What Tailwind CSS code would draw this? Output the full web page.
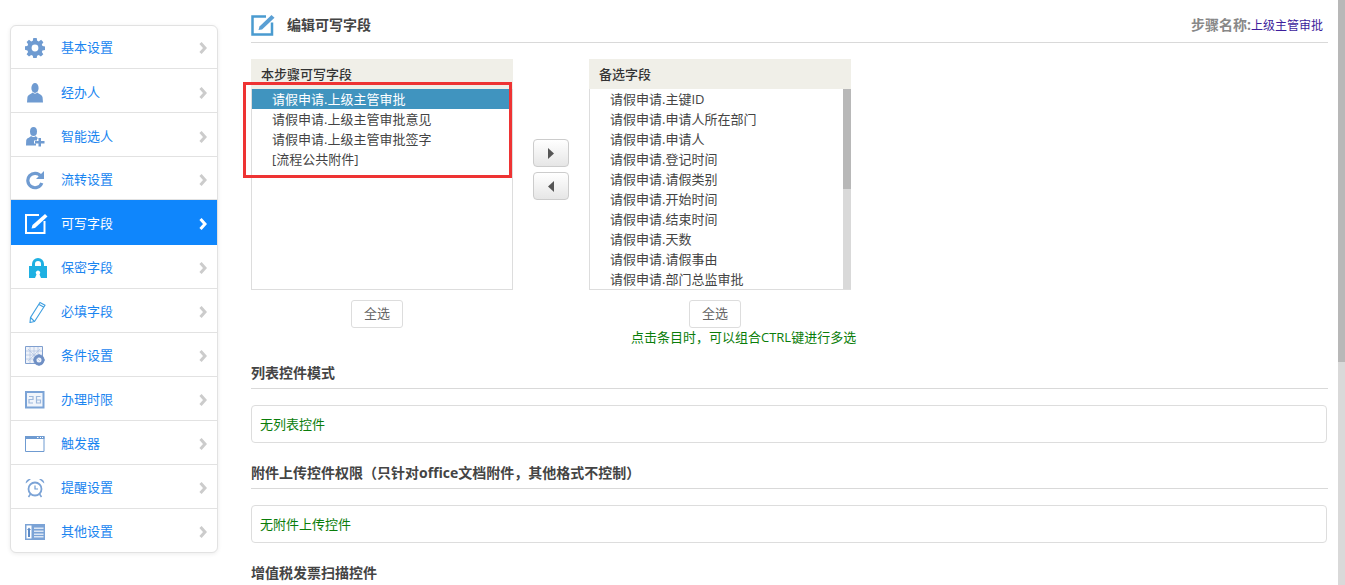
<!DOCTYPE html>
<html lang="zh-CN">
<head>
  <meta charset="UTF-8">
  <title>编辑可写字段</title>
  <script src="https://cdn.jsdelivr.net/npm/@tailwindcss/browser@4"></script>
</head>
<body class="bg-white h-[585px] overflow-hidden relative font-['Open_Sans','Noto_Sans_CJK_SC',sans-serif] text-[13px] text-[#333]">
  <div class="flex items-start">
    <!-- sidebar -->
    <ul class="ml-[10px] mt-[25px] w-[208px] shrink-0 bg-white border border-[#e2e2e2] rounded-md shadow-[0_1px_4px_rgba(0,0,0,0.08)] text-[#1a85f0] overflow-hidden">
      <li class="h-[43px] pt-[2px] border-b border-[#e2e2e2] flex items-center pl-[14px]">
        <svg class="w-[20px] h-[20px] mr-[16px] shrink-0" viewBox="0 0 20 20" fill="#6f9bd1"><path fill-rule="evenodd" d="M8.3 0h3.4l.5 2.7 1.6.7L16.100 1.800l2.300 2.400-1.600 2.200.7 1.700 2.500.4v3.400l-2.500.5-.7 1.600 1.500 2.300-2.400 2.300-2.200-1.500-1.600.7-.5 2.600H8.300l-.5-2.600-1.600-.7-2.200 1.500-2.400-2.300 1.500-2.300-.7-1.600L0 11.700V8.300l2.400-.4.700-1.700-1.500-2.200L4 1.800l2.200 1.600 1.600-.7zM10 6.600a3.400 3.400 0 1 0 0 6.800 3.400 3.400 0 0 0 0-6.800z"/></svg>
        <span class="w-[138px]">基本设置</span>
        <svg class="w-[8px] h-[12px]" viewBox="0 0 8 12" fill="none" stroke="#cccccc" stroke-width="3"><path d="M1.500 1l4.500 5-4.500 5"/></svg>
      </li>
      <li class="h-[44px] pt-[4px] border-b border-[#e2e2e2] flex items-center pl-[14px]">
        <svg class="w-[20px] h-[20px] mr-[16px] shrink-0" viewBox="0 0 20 20" fill="#6f9bd1"><ellipse cx="10" cy="5" rx="3.600" ry="5"/><path d="M7.500 9.500c-1 1.500-4.800 2-5.100 5L2 19.500h16l-.4-5c-.3-3-4.100-3.500-5.100-5-1.500 1.500-3.500 1.500-5 0z"/></svg>
        <span class="w-[138px]">经办人</span>
        <svg class="w-[8px] h-[12px]" viewBox="0 0 8 12" fill="none" stroke="#cccccc" stroke-width="3"><path d="M1.500 1l4.500 5-4.500 5"/></svg>
      </li>
      <li class="h-[44px] pt-[4px] border-b border-[#e2e2e2] flex items-center pl-[14px]">
        <svg class="w-[20px] h-[20px] mr-[16px] shrink-0" viewBox="0 0 20 20" fill="#6f9bd1"><ellipse cx="8.500" cy="4.500" rx="3.500" ry="4.500"/><path d="M6 9c-1 1.500-4.500 2-4.800 4.500L1 18.500h10v-2H9v-3h3v-2h1.500C12 10.500 11.500 10 11 9c-1.500 1.300-3.500 1.300-5 0z"/><path d="M13.500 11h2.500v3h3.500v2.500H16v3h-2.500v-3H10V14h3.500z"/></svg>
        <span class="w-[138px]">智能选人</span>
        <svg class="w-[8px] h-[12px]" viewBox="0 0 8 12" fill="none" stroke="#cccccc" stroke-width="3"><path d="M1.500 1l4.500 5-4.500 5"/></svg>
      </li>
      <li class="h-[43px] pt-[4px] border-b border-[#e2e2e2] flex items-center pl-[14px]">
        <svg class="w-[20px] h-[20px] mr-[16px] shrink-0" viewBox="0 0 20 20" fill="none"><path d="M15.800 6.200A7.200 7.200 0 1 0 16.800 13" stroke="#6f9bd1" stroke-width="3.200"/><path d="M19 1v8h-8z" fill="#6f9bd1"/></svg>
        <span class="w-[138px]">流转设置</span>
        <svg class="w-[8px] h-[12px]" viewBox="0 0 8 12" fill="none" stroke="#cccccc" stroke-width="3"><path d="M1.500 1l4.500 5-4.500 5"/></svg>
      </li>
      <li class="h-[45px] pt-[2px] -mx-px pl-[15px] bg-[#0f86fc] text-white flex items-center">
        <svg class="w-[24px] h-[20px] mr-[12px] shrink-0" viewBox="0 0 24 20" fill="none"><path d="M19.500 7v12H1V1h13" stroke="#fff" stroke-width="2"/><path d="M6.500 14.500l1-3.500L20 0l2.500 2.500L10 14z" fill="#fff"/></svg>
        <span class="w-[138px]">可写字段</span>
        <svg class="w-[8px] h-[12px]" viewBox="0 0 8 12" fill="none" stroke="#ffffff" stroke-width="3"><path d="M1.500 1l4.500 5-4.500 5"/></svg>
      </li>
      <li class="h-[44px] pt-[2px] border-b border-[#e2e2e2] flex items-center pl-[14px]">
        <svg class="w-[20px] h-[21px] ml-[3px] mr-[13px] shrink-0" viewBox="0 0 20 21" fill="none"><path d="M5.500 11V7a4.500 4.500 0 0 1 9 0v4" stroke="#1eb0e2" stroke-width="3"/><path fill-rule="evenodd" d="M1 9h18v12h-6l-1.500-3.500a2.200 2.200 0 1 0-3 0L7 21H1z" fill="#1eb0e2"/></svg>
        <span class="w-[138px]">保密字段</span>
        <svg class="w-[8px] h-[12px]" viewBox="0 0 8 12" fill="none" stroke="#cccccc" stroke-width="3"><path d="M1.500 1l4.500 5-4.500 5"/></svg>
      </li>
      <li class="h-[44px] pt-[2px] border-b border-[#e2e2e2] flex items-center pl-[14px]">
        <svg class="w-[20px] h-[22px] ml-[3px] mr-[13px] shrink-0" viewBox="0 0 20 22" fill="none" stroke="#3f9fe0" stroke-width="1.100"><path d="M6.500 20.500l-4.500 1 .5-5L12 1.500l5 2.800z"/><path d="M2.500 16.500l4 4M11 3.500l5 2.800"/></svg>
        <span class="w-[138px]">必填字段</span>
        <svg class="w-[8px] h-[12px]" viewBox="0 0 8 12" fill="none" stroke="#cccccc" stroke-width="3"><path d="M1.500 1l4.500 5-4.500 5"/></svg>
      </li>
      <li class="h-[44px] pt-[2px] border-b border-[#e2e2e2] flex items-center pl-[14px]">
        <svg class="w-[20px] h-[20px] mr-[16px] shrink-0" viewBox="0 0 20 20" fill="none"><path d="M.5.500h17v17H.5z" stroke="#7f9fcf" fill="#eef2f9"/><path d="M3 3l12 12M15 3L3 15M9 1v16M1 9h16M5 1v16M13 1v8M1 5h16M1 13h8" stroke="#b5c7e3" stroke-width=".8"/><circle cx="14" cy="14" r="4" stroke="#6f8fc4" stroke-width="3"/><path d="M14 8.500v2M14 17.500v2M8.500 14h2M17.500 14h2" stroke="#6f8fc4" stroke-width="2"/></svg>
        <span class="w-[138px]">条件设置</span>
        <svg class="w-[8px] h-[12px]" viewBox="0 0 8 12" fill="none" stroke="#cccccc" stroke-width="3"><path d="M1.500 1l4.500 5-4.500 5"/></svg>
      </li>
      <li class="h-[44px] pt-[2px] border-b border-[#e2e2e2] flex items-center pl-[14px]">
        <svg class="w-[20px] h-[18px] mr-[16px] shrink-0" viewBox="0 0 20 18" fill="none"><path d="M1 1h17.500v15.500H1z" stroke="#7ba3d6" stroke-width="2" fill="#f1f5fb"/><path d="M4 5.500h4v3H4v3.500h4M15.500 5.500h-4v6.500h4V9h-4" stroke="#9db8dc" stroke-width="1.200"/></svg>
        <span class="w-[138px]">办理时限</span>
        <svg class="w-[8px] h-[12px]" viewBox="0 0 8 12" fill="none" stroke="#cccccc" stroke-width="3"><path d="M1.500 1l4.500 5-4.500 5"/></svg>
      </li>
      <li class="h-[44px] pt-[2px] border-b border-[#e2e2e2] flex items-center pl-[14px]">
        <svg class="w-[20px] h-[16px] mr-[16px] shrink-0" viewBox="0 0 20 16" fill="none"><path d="M.5.500h18.500v15H.5z" stroke="#6f9bd1"/><path d="M0 0h19.500v3H0z" fill="#6f9bd1"/><path d="M12 1h1.500v1H12zM15 1h1v1h-1zM17 1h1v1h-1z" fill="#fff"/></svg>
        <span class="w-[138px]">触发器</span>
        <svg class="w-[8px] h-[12px]" viewBox="0 0 8 12" fill="none" stroke="#cccccc" stroke-width="3"><path d="M1.500 1l4.500 5-4.500 5"/></svg>
      </li>
      <li class="h-[44px] pt-[2px] border-b border-[#e2e2e2] flex items-center pl-[14px]">
        <svg class="w-[20px] h-[20px] mr-[16px] shrink-0" viewBox="0 0 20 20" fill="none"><circle cx="10" cy="11" r="6.500" stroke="#7ba3d6" stroke-width="1.800"/><path d="M10 7.500V11h3" stroke="#6f9bd1" stroke-width="1.200"/><path d="M.8 5.500C.5 2.500 3 .5 6 1zM19.200 5.500c.3-3-2.200-5-5.200-4.500z" fill="#7ba3d6"/><path d="M5.500 16l-2 3M14.500 16l2 3" stroke="#7ba3d6" stroke-width="1.500"/></svg>
        <span class="w-[138px]">提醒设置</span>
        <svg class="w-[8px] h-[12px]" viewBox="0 0 8 12" fill="none" stroke="#cccccc" stroke-width="3"><path d="M1.500 1l4.500 5-4.500 5"/></svg>
      </li>
      <li class="h-[43px] pt-[3px] flex items-center pl-[14px]">
        <svg class="w-[20px] h-[16px] mr-[16px] shrink-0" viewBox="0 0 20 16"><path d="M0 0h20v16H0z" fill="#7ba3d6"/><path d="M1.500 1.500h5v13h-5z" fill="#fff"/><path d="M4 3.500L6 6H5v7H3V6H2z" fill="#5c8ac6"/><path d="M9 3.500h9.500v1.500H9zM9 6.500h9.500V8H9zM9 9.500h9.500V11H9zM9 12h9.500v1.500H9z" fill="#dbe6f4"/></svg>
        <span class="w-[138px]">其他设置</span>
        <svg class="w-[8px] h-[12px]" viewBox="0 0 8 12" fill="none" stroke="#cccccc" stroke-width="3"><path d="M1.500 1l4.500 5-4.500 5"/></svg>
      </li>
    </ul>

    <!-- main -->
    <div class="ml-[33px] w-[1077px] shrink-0">
      <div class="h-[43px] border-b border-[#d9d9d9] flex items-center pt-[9px] pb-px pr-[5px]">
        <svg class="w-[24px] h-[21px] mr-[12px] shrink-0" viewBox="0 0 24 21" fill="none"><path d="M21 7.500v12H1.500V1.500H15" stroke="#4a9bd0" stroke-width="2.500"/><path d="M7.500 15l1-3.500L20.500 0l3 2.800L11 14.500z" fill="#5a9fd4"/></svg>
        <span class="font-bold text-[14px] leading-[20px] text-[#444]">编辑可写字段</span>
        <span class="ml-auto pb-[2px] font-bold text-[14px] text-[#888]">步骤名称:</span>
        <span class="pt-[1px] text-[12px] text-[#3d1d9c]">上级主管审批</span>
      </div>

      <div class="flex mt-[16px]">
        <div class="w-[262px] shrink-0">
          <div class="h-[30px] bg-[#f0efe8] pl-[10px] leading-[30px] font-medium">本步骤可写字段</div>
          <div class="h-[201px] border-x border-b border-[#dddddd] pr-[2px] leading-[20px] text-[#444]">
            <div class="h-[20px] bg-[#4094bf] text-white pl-[20px]">请假申请.上级主管审批</div>
            <div class="h-[20px] pl-[20px]">请假申请.上级主管审批意见</div>
            <div class="h-[20px] pl-[20px]">请假申请.上级主管审批签字</div>
            <div class="h-[20px] pl-[20px]">[流程公共附件]</div>
          </div>
          <button class="block mt-[10px] ml-[100px] w-[52px] h-[28px] border border-[#dddddd] rounded-[3px] bg-white text-[#666]">全选</button>
        </div>

        <div class="w-[76px] shrink-0 flex flex-col items-center pt-[80px]">
          <button class="w-[36px] h-[28px] border border-[#cccccc] rounded-[4px] bg-linear-to-b from-white to-[#e6e6e6] flex items-center justify-center">
            <svg class="w-[6px] h-[11px]" viewBox="0 0 6 11" fill="#555555"><path d="M0 0l6 5.500-6 5.500z"/></svg>
          </button>
          <button class="mt-[5px] w-[36px] h-[28px] border border-[#cccccc] rounded-[4px] bg-linear-to-b from-white to-[#e6e6e6] flex items-center justify-center">
            <svg class="w-[6px] h-[11px]" viewBox="0 0 6 11" fill="#555555"><path d="M6 0L0 5.500l6 5.500z"/></svg>
          </button>
        </div>

        <div class="w-[262px] shrink-0">
          <div class="h-[30px] bg-[#f0efe8] pl-[10px] leading-[30px] font-medium">备选字段</div>
          <div class="h-[201px] border-l border-b border-[#dddddd] flex overflow-hidden leading-[20px] text-[#444]">
            <div class="grow pl-[20px]">
              <div class="h-[20px]">请假申请.主键ID</div>
              <div class="h-[20px]">请假申请.申请人所在部门</div>
              <div class="h-[20px]">请假申请.申请人</div>
              <div class="h-[20px]">请假申请.登记时间</div>
              <div class="h-[20px]">请假申请.请假类别</div>
              <div class="h-[20px]">请假申请.开始时间</div>
              <div class="h-[20px]">请假申请.结束时间</div>
              <div class="h-[20px]">请假申请.天数</div>
              <div class="h-[20px]">请假申请.请假事由</div>
              <div class="h-[20px]">请假申请.部门总监审批</div>
            </div>
            <div class="w-[8px] h-[201px] bg-[#d9d9d9] shrink-0">
              <div class="h-[100px] bg-[#b8b8b8]"></div>
            </div>
          </div>
          <button class="block mt-[10px] ml-[100px] w-[52px] h-[28px] border border-[#dddddd] rounded-[3px] bg-white text-[#666]">全选</button>
        </div>
      </div>

      <p class="ml-[380px] h-[20px] leading-[18px] text-[#0a7d0a]">点击条目时，可以组合CTRL键进行多选</p>

      <div class="mt-[14px] h-[27px] border-b border-[#d9d9d9] font-bold text-[14px] text-[#444] leading-[22px]">列表控件模式</div>
      <div class="mt-[16px] h-[38px] w-[1076px] border border-[#dddddd] rounded-[4px] pl-[8px] leading-[36px] text-[#0a7d0a]">无列表控件</div>

      <div class="mt-[19px] h-[27px] border-b border-[#d9d9d9] font-bold text-[14px] text-[#444] leading-[22px]">附件上传控件权限（只针对office文档附件，其他格式不控制）</div>
      <div class="mt-[16px] h-[38px] w-[1076px] border border-[#dddddd] rounded-[4px] pl-[8px] leading-[36px] text-[#0a7d0a]">无附件上传控件</div>

      <div class="mt-[20px] h-[26px] font-bold text-[14px] text-[#444] leading-[20px]">增值税发票扫描控件</div>
    </div>
  </div>

  <!-- red annotation over the list -->
  <div class="absolute left-[243px] top-[82px] w-[269px] h-[96px] border-[3px] border-[#ee3333]"></div>

  <!-- page scrollbar -->
  <div class="absolute right-0 top-0 w-[7px] h-[585px] bg-[#d9d9d9]">
    <div class="h-[362px] bg-[#b8b8b8]"></div>
  </div>
</body>
</html>
